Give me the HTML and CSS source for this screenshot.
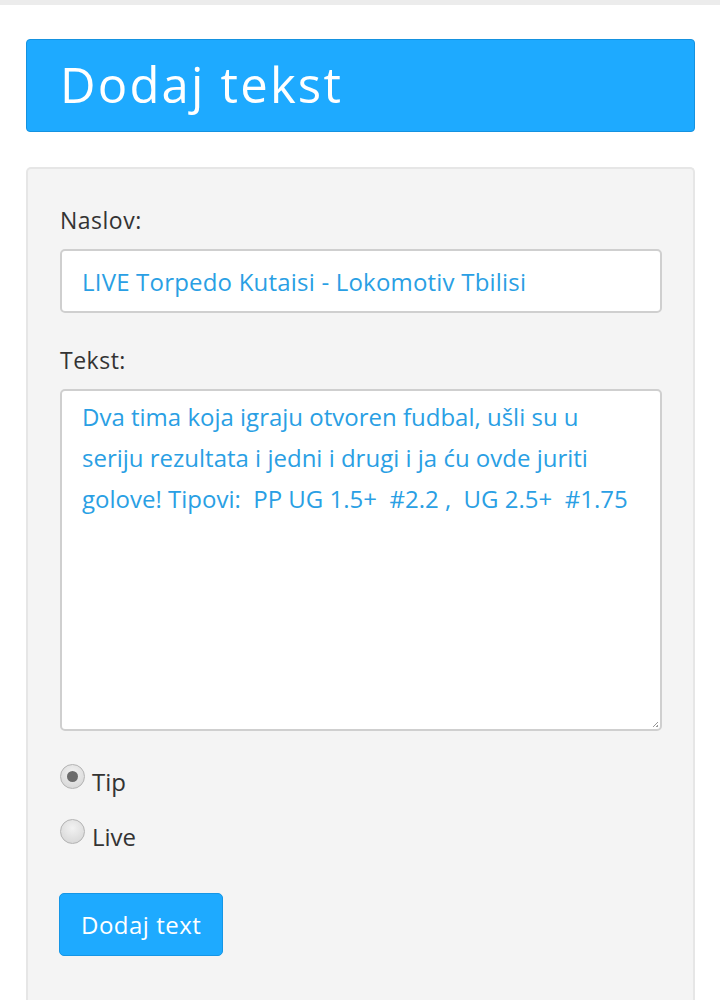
FILE: index.html
```html
<!DOCTYPE html>
<html>
<head>
<meta charset="utf-8">
<link rel="stylesheet" href="styles.css">
</head>
<body>
<div class="topbar"></div>
<div class="page">
  <div class="header"><h1 class="title">Dodaj tekst</h1></div>
  <form class="card">
    <label class="label">Naslov:</label>
    <div class="input">LIVE Torpedo Kutaisi - Lokomotiv Tbilisi</div>
    <label class="label label-text">Tekst:</label>
    <div class="textarea">Dva tima koja igraju otvoren fudbal, ušli su u seriju rezultata i jedni i drugi i ja ću ovde juriti golove! Tipovi:&nbsp; PP UG 1.5+&nbsp; #2.2 ,&nbsp; UG 2.5+&nbsp; #1.75<span class="grip"></span></div>
    <div class="radios">
      <div class="radio-row"><span class="radio checked"></span><span class="radio-label">Tip</span></div>
      <div class="radio-row"><span class="radio"></span><span class="radio-label">Live</span></div>
    </div>
    <div class="button">Dodaj text</div>
  </form>
</div>
</body>
</html>
```
FILE: styles.css
```css
html, body { margin: 0; padding: 0; background: #fff; }
body { font-family: "Open Sans", "Noto Sans", sans-serif; color: #333; }
.topbar { height: 5px; background: #ececec; }
.page { padding: 34px 25px 0 26px; }
.header {
  background: #1eaaff;
  border: 1px solid #1592e0;
  border-radius: 4px;
  height: 93px;
  box-sizing: border-box;
  padding-left: 33px;
  display: flex;
  align-items: center;
}
.title {
  margin: 0;
  font-family: "Open Sans", sans-serif;
  font-weight: 400;
  font-size: 49px;
  color: #fff;
  letter-spacing: 2.2px;
  line-height: 1;
  padding-bottom: 2px;
}
.card {
  margin-top: 35px;
  background: #f4f4f4;
  border: 2px solid #e6e6e6;
  border-bottom: none;
  border-radius: 5px 5px 0 0;
  padding: 34px 31px 60px 32px;
  min-height: 840px;
  box-sizing: border-box;
  display: flex;
  flex-direction: column;
}
.card > * { flex-shrink: 0; }
.label { font-size: 23px; line-height: 34px; color: #333; display: block; letter-spacing: 0.5px; }
.label-text { margin-top: 30px; }
.input {
  margin-top: 12px;
  height: 64px;
  box-sizing: border-box;
  border: 2px solid #cfcfcf;
  border-radius: 5px;
  background: #fff;
  padding: 0 20px;
  display: flex;
  align-items: center;
  font-size: 24px;
  letter-spacing: 0.2px;
  color: #2a9fe4;
}
.textarea {
  position: relative;
  margin-top: 12px;
  height: 342px;
  box-sizing: border-box;
  border: 2px solid #cfcfcf;
  border-radius: 5px;
  background: #fff;
  padding: 5px 20px;
  font-size: 24px;
  line-height: 41px;
  color: #2a9fe4;
}
.grip {
  position: absolute;
  right: 2px;
  bottom: 2px;
  width: 5px;
  height: 5px;
  background: linear-gradient(135deg, transparent 50%, #999 50%, #999 60%, transparent 60%, transparent 75%, #999 75%);
}
.radios { margin-top: 34px; display: flex; flex-direction: column; gap: 23px; }
.radio-row { display: flex; align-items: center; gap: 7px; height: 32px; }
.radio {
  width: 25px; height: 25px; box-sizing: border-box;
  border-radius: 50%;
  border: 1px solid #b3b3b3;
  background: radial-gradient(circle at 50% 35%, #f2f2f2, #dcdcdc 70%, #cfcfcf);
  display: flex; align-items: center; justify-content: center;
  margin-top: -10px;
}
.radio.checked::after {
  content: ""; width: 11px; height: 11px; border-radius: 50%; background: #6b6b6b;
}
.radio-label { font-size: 24px; color: #333; }
.button {
  margin-top: 41px;
  margin-left: -1px;
  align-self: flex-start;
  background: #1eaaff;
  border: 1px solid #1596e6;
  border-radius: 5px;
  color: #fff;
  font-size: 24px;
  letter-spacing: 0.5px;
  height: 63px;
  box-sizing: border-box;
  padding: 0 21px;
  display: flex;
  align-items: center;
}
```
